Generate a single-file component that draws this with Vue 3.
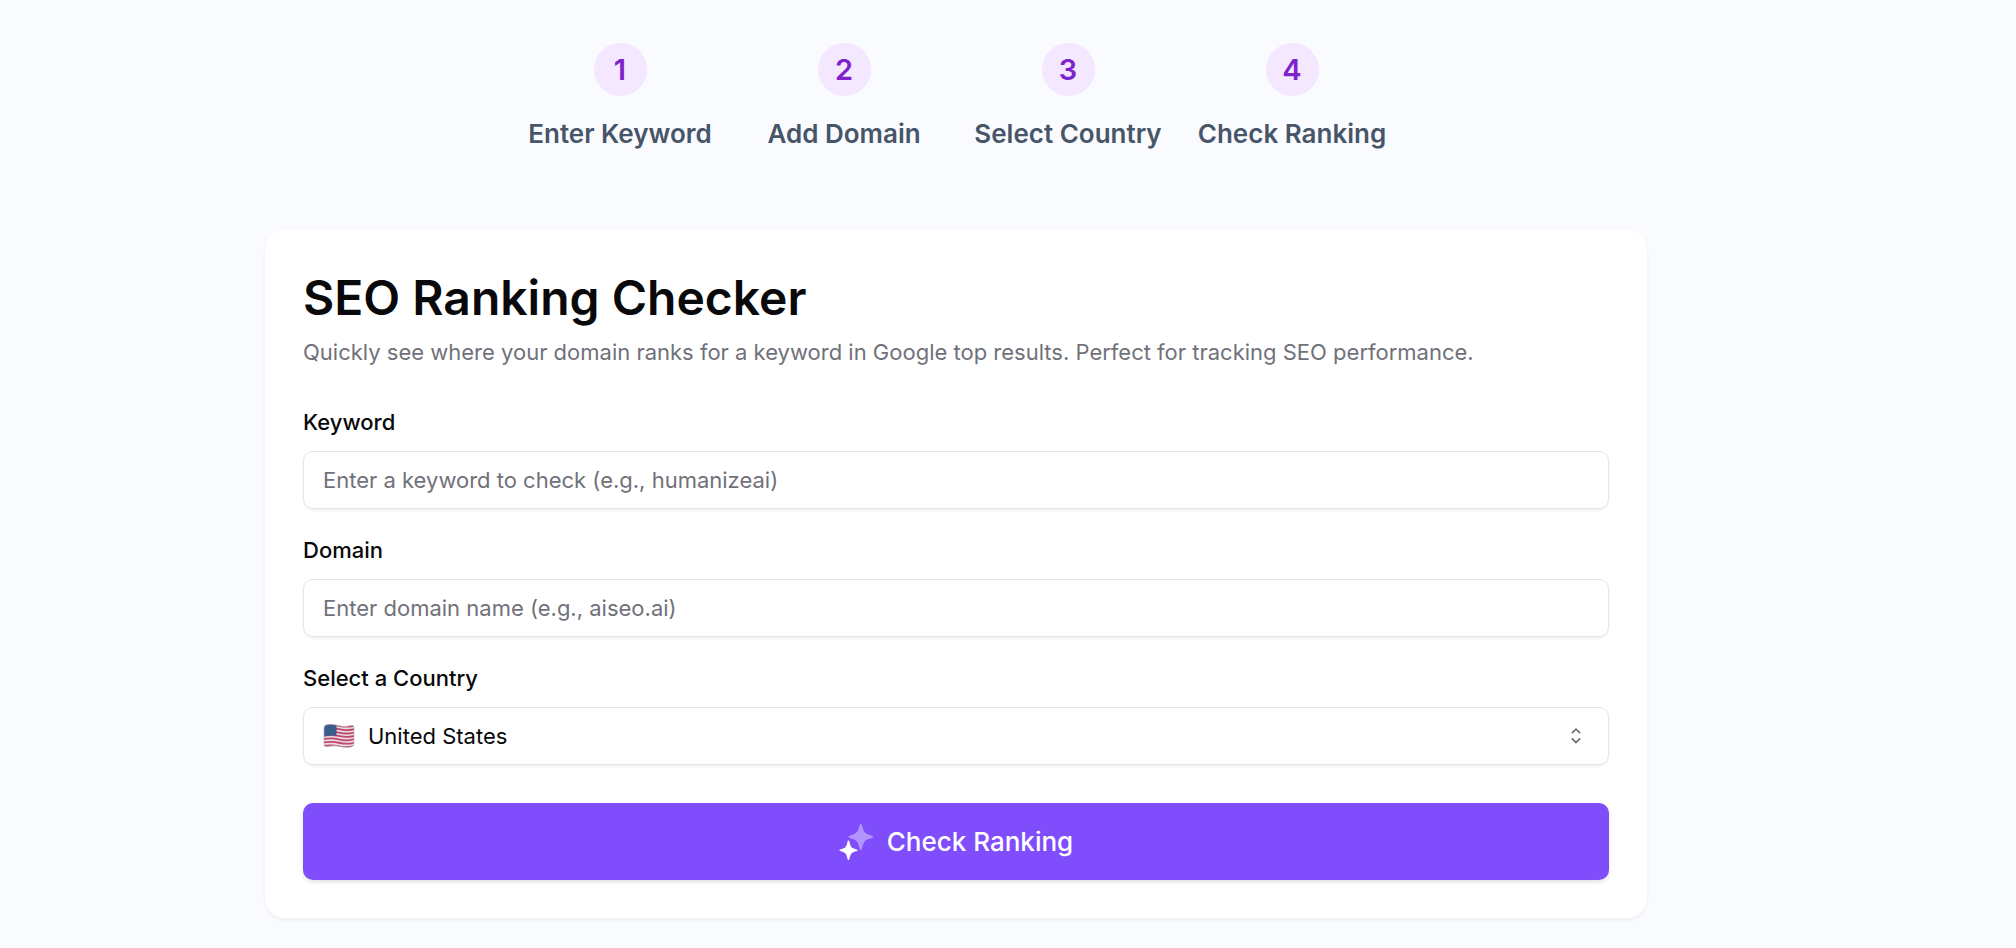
<script setup>
import { ref } from 'vue'

const steps = ['Enter Keyword', 'Add Domain', 'Select Country', 'Check Ranking']
const keyword = ref('')
const domain = ref('')
const country = ref('us')
</script>

<template>
  <main class="page">
    <ol class="steps">
      <li v-for="(step, index) in steps" :key="step" class="step">
        <span class="step-number">{{ index + 1 }}</span>
        <span class="step-label">{{ step }}</span>
      </li>
    </ol>

    <form class="card" @submit.prevent>
      <header class="card-header">
        <h1 class="title">SEO Ranking Checker</h1>
        <p class="subtitle">
          Quickly see where your domain ranks for a keyword in Google top results. Perfect for tracking SEO performance.
        </p>
      </header>

      <div class="fields">
        <div class="field">
          <label class="label" for="keyword">Keyword</label>
          <input id="keyword" v-model="keyword" class="control" type="text" placeholder="Enter a keyword to check (e.g., humanizeai)" />
        </div>
        <div class="field">
          <label class="label" for="domain">Domain</label>
          <input id="domain" v-model="domain" class="control" type="text" placeholder="Enter domain name (e.g., aiseo.ai)" />
        </div>
        <div class="field">
          <label class="label" for="country">Select a Country</label>
          <div class="select-wrap">
            <select id="country" v-model="country" class="control select">
              <option value="us">United States</option>
            </select>
            <svg class="flag" viewBox="0 0 32 24" aria-hidden="true">
              <defs>
                <clipPath id="flag-shape">
                  <path d="M1 4Q1 1 4 .8C10 0 13 1 17 2S26 2 28 1.4Q31 1 31 4V19Q31 22.600 28 23C22 24 18 22.600 14 22S7 22.400 4 22.800Q1 23 1 20Z" />
                </clipPath>
              </defs>
              <g clip-path="url(#flag-shape)">
                <rect width="32" height="24" fill="#eadde5" />
                <g fill="none" stroke="#c0486c" stroke-width="1.800">
                  <path d="M0 1.600C8 0 12 .8 17 2S26 3 32 1.600" />
                  <path d="M0 5C8 3.400 12 4.200 17 5.400S26 6.400 32 5" />
                  <path d="M0 8.400C8 6.800 12 7.600 17 8.800S26 9.800 32 8.400" />
                  <path d="M0 11.800C8 10.200 12 11 17 12.200S26 13.200 32 11.800" />
                  <path d="M0 15.200C8 13.600 12 14.400 17 15.600S26 16.600 32 15.200" />
                  <path d="M0 18.600C8 17 12 17.800 17 19S26 20 32 18.600" />
                  <path d="M0 22.200C8 20.600 12 21.400 17 22.600S26 23.400 32 22" />
                </g>
                <path d="M0 0H13.500V12C9 11 5 11.600 0 12.600Z" fill="#34578a" />
                <g fill="none" stroke="#63809f" stroke-width=".8" stroke-dasharray=".8 1.600">
                  <path d="M2 3H13M3 5H13M2 7H13M3 9H13M2 11H10" />
                </g>
              </g>
              <path d="M1 4Q1 1 4 .8C10 0 13 1 17 2S26 2 28 1.400Q31 1 31 4V19Q31 22.600 28 23C22 24 18 22.600 14 22S7 22.400 4 22.800Q1 23 1 20Z" fill="none" stroke="#b9aeb7" stroke-width=".7" />
            </svg>
            <svg class="caret" viewBox="0 0 24 24" aria-hidden="true">
              <path d="M7.800 9.200 12 5.200 16.200 9.200M7.800 14.400 12 18.400 16.200 14.400" />
            </svg>
          </div>
        </div>
      </div>

      <button class="submit" type="submit">
        <svg class="sparkles" viewBox="0 0 34 36" aria-hidden="true">
          <path class="sparkle-large" d="M21.800 0C22.500 0 22.800.6 23.100 1.600C24.700 7.800 25.400 9.700 32.300 11.400C33.400 11.700 34 12 34 12.800S33.400 13.900 32.300 14.200C25.400 15.900 24.700 17.600 23.100 24.300C22.800 25.400 22.500 26 21.800 26S20.800 25.400 20.500 24.300C18.900 17.600 18.200 15.900 11.300 14.200C10.200 13.900 9.600 13.600 9.600 12.800S10.200 11.700 11.300 11.400C18.200 9.700 18.900 7.800 20.500 1.600C20.800.6 21.100 0 21.800 0Z" />
          <path class="sparkle-small" d="M9.500 16.500C10.100 16.500 10.300 17 10.500 17.700C11.700 22.800 12.200 23.900 17.200 25.200C18 25.400 18.500 25.700 18.500 26.300S18 27.100 17.200 27.300C12.200 28.600 11.700 29.800 10.500 34.800C10.300 35.500 10.100 36 9.500 36S8.700 35.500 8.500 34.800C7.300 29.800 6.800 28.600 1.800 27.300C1 27.100.5 26.900.5 26.300S1 25.400 1.800 25.200C6.800 23.900 7.300 22.800 8.500 17.700C8.700 17 8.900 16.500 9.500 16.500Z" />
        </svg>
        <span>Check Ranking</span>
      </button>
    </form>
  </main>
</template>

<style>
body {
  margin: 0;
  background: #fafbff;
}
</style>

<style scoped>
.page {
  box-sizing: border-box;
  padding: 43px 104px 30px 0;
  color: #09090b;
  font-family: Inter, "Liberation Sans", sans-serif;
  font-size: 22px;
}

.steps {
  display: grid;
  grid-template-columns: repeat(4, minmax(0, 1fr));
  gap: 36px;
  max-width: 860px;
  margin: 0 auto 78px;
  padding: 0;
  list-style: none;
}

.step {
  display: flex;
  flex-direction: column;
  align-items: center;
  gap: 20px;
  white-space: nowrap;
}

.step-number {
  display: flex;
  align-items: center;
  justify-content: center;
  width: 53px;
  height: 53px;
  border-radius: 50%;
  background: #f3e8ff;
  color: #7e22ce;
  font-size: 29px;
  font-weight: 600;
}

.step-label {
  color: #475569;
  font-size: 26px;
  font-weight: 600;
  line-height: 36px;
}

.card {
  box-sizing: border-box;
  max-width: 1382px;
  margin: 0 auto;
  padding: 38px;
  border-radius: 20px;
  background: #fff;
  box-shadow: 0 2px 4px rgba(0, 0, 0, 0.05);
}

.card-header {
  margin-bottom: 43px;
}

.title {
  margin: 0;
  font-size: 48px;
  font-weight: 600;
  line-height: 60px;
}

.subtitle {
  margin: 8px 0 0;
  color: #71717a;
  line-height: 32px;
}

.fields {
  display: grid;
  gap: 30px;
  margin-bottom: 38px;
}

.field {
  display: grid;
  gap: 18px;
}

.label {
  font-weight: 500;
  line-height: 22px;
}

.control {
  box-sizing: border-box;
  display: block;
  width: 100%;
  height: 58px;
  padding: 0 19px;
  border: 1px solid #e4e4e7;
  border-radius: 10px;
  background: #fff;
  box-shadow: 0 2px 3px rgba(0, 0, 0, 0.05);
  color: #09090b;
  font: inherit;
}

.control::placeholder {
  color: #71717a;
  opacity: 1;
}

.select-wrap {
  position: relative;
}

.select {
  padding-left: 64px;
  appearance: none;
}

.flag {
  position: absolute;
  top: 17px;
  left: 20px;
  width: 32px;
  height: 24px;
  pointer-events: none;
}

.caret {
  position: absolute;
  top: 17px;
  right: 21px;
  width: 24px;
  height: 24px;
  fill: none;
  stroke: #747475;
  stroke-width: 1.8;
  pointer-events: none;
}

.submit {
  display: flex;
  align-items: center;
  justify-content: center;
  gap: 14px;
  width: 100%;
  height: 77px;
  padding: 0 38px;
  border: 0;
  border-radius: 10px;
  background: #7f4dfc;
  box-shadow: 0 2px 4px rgba(0, 0, 0, 0.12);
  color: #fff;
  font: inherit;
  font-size: 26px;
  font-weight: 500;
  cursor: pointer;
}

.sparkles {
  width: 34px;
  height: 36px;
  fill: #fff;
}

.sparkle-large {
  opacity: 0.4;
}
</style>
